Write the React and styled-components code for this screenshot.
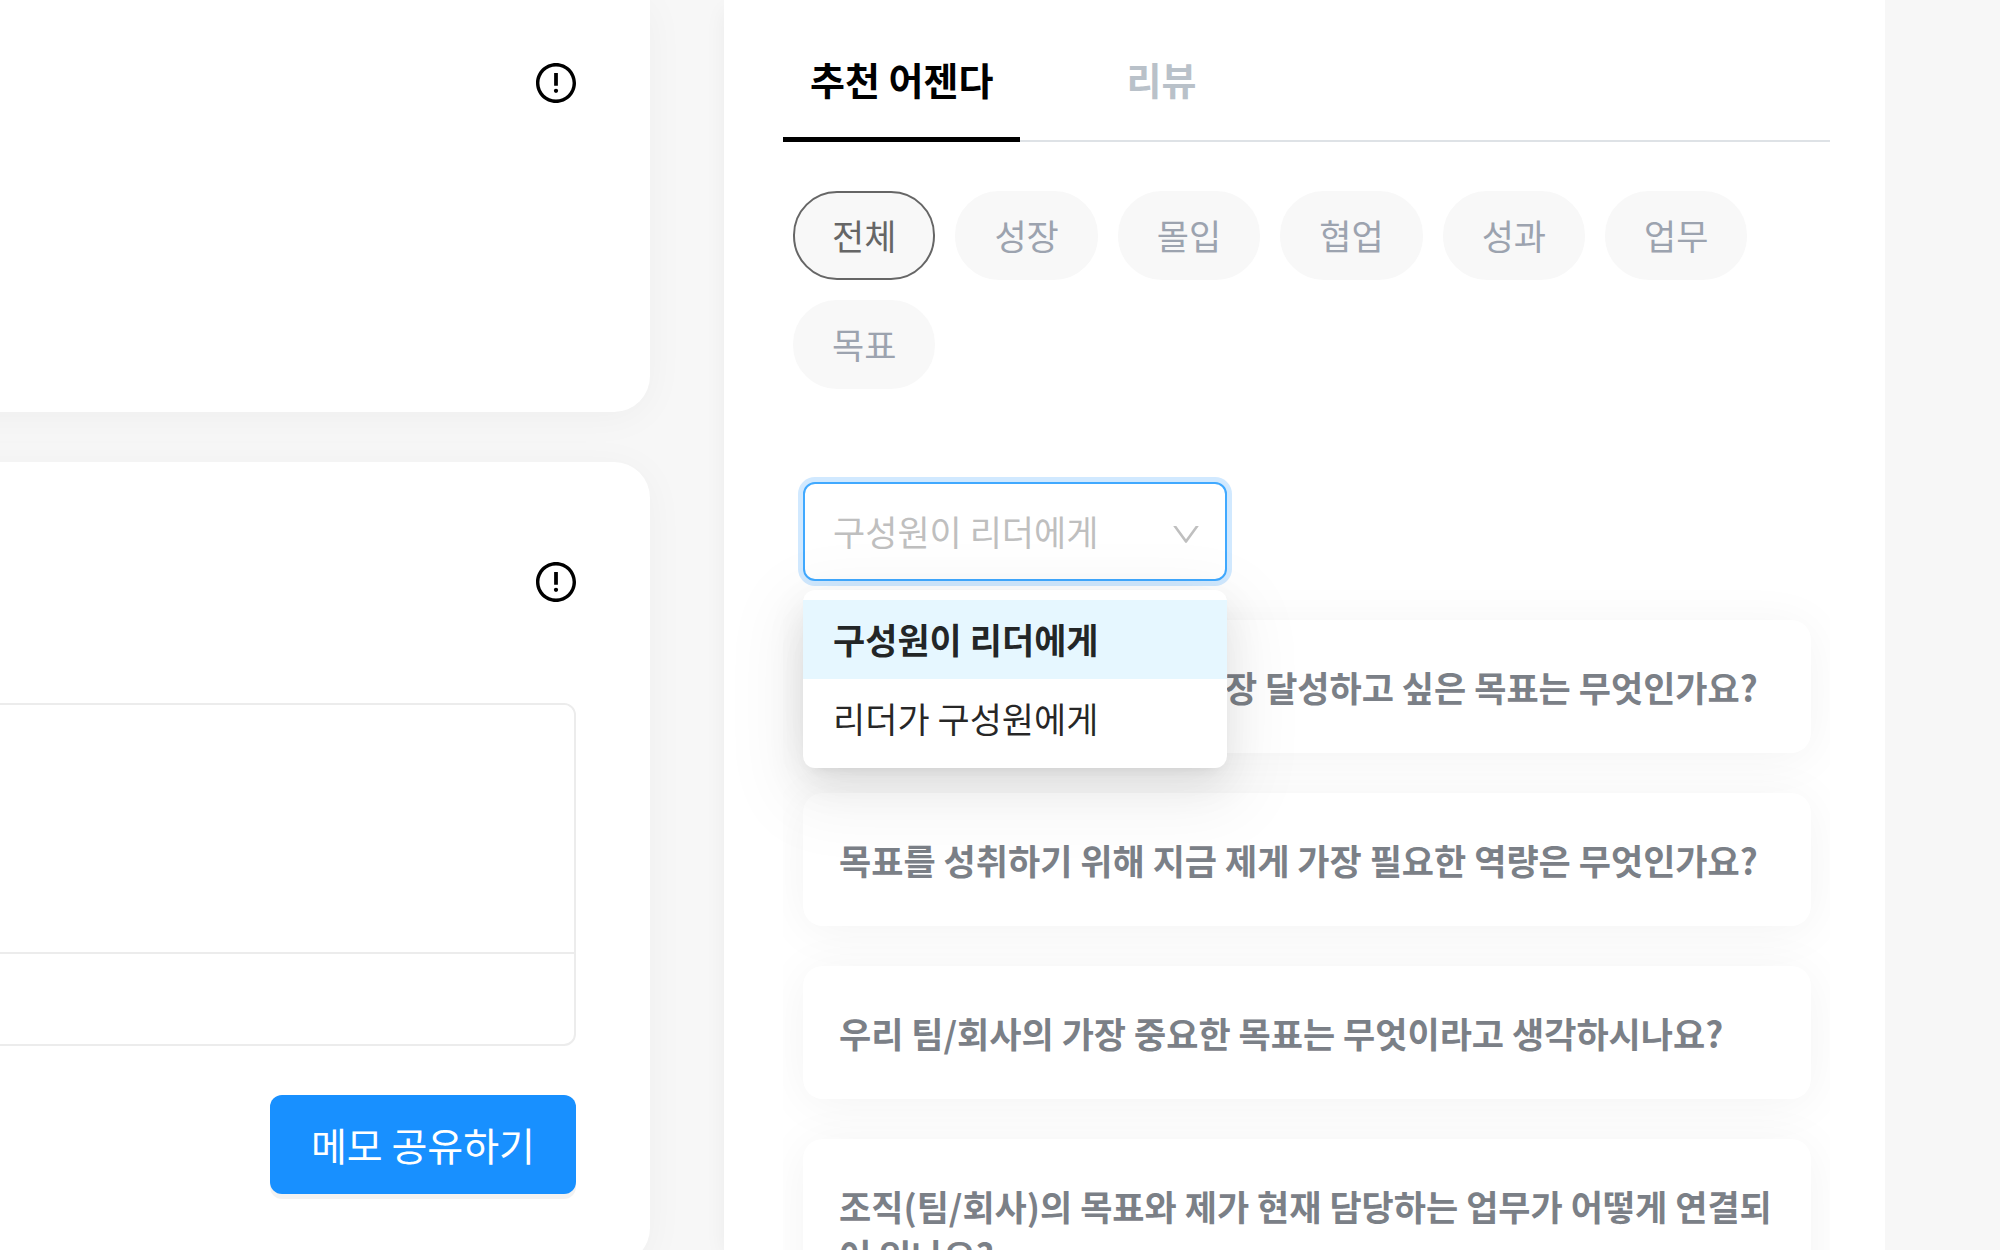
import React, {useState} from 'react'
import styled, {createGlobalStyle} from 'styled-components'

const GlobalStyle = createGlobalStyle`
  * {
    box-sizing: border-box;
  }
  body {
    margin: 0;
    background-color: #f7f7f7;
    overflow: hidden;
  }
  body, button, textarea {
    font-family: 'Noto Sans CJK KR', 'Noto Sans', sans-serif;
  }
`

const Page = styled.div`
  display: grid;
  grid-template-columns: minmax(0, 650fr) minmax(0, 1161fr);
  gap: 74px;
  height: 100vh;
  padding-right: 115px;
`
const Notes = styled.section`
  display: flex;
  flex-direction: column;
  gap: 50px;
  margin-left: -120px;
`
const NoteCard = styled.article`
  flex: none;
  display: flex;
  flex-direction: column;
  align-items: flex-end;
  padding: ${props => props.$first ? '63px' : '100px'} 74px 70px;
  min-height: ${props => props.$first ? '412px' : '0'};
  border-radius: ${props => props.$first ? '0 0 36px 36px' : '36px'};
  background-color: #fff;
  box-shadow: 0 5px 40px rgba(0, 0, 0, 0.04);
`
const InfoButton = styled.button`
  display: flex;
  padding: 0;
  border: none;
  background: none;
  color: #000;
  cursor: pointer;
`
const Editor = styled.div`
  width: 100%;
  margin: 101px 0 49px;
  border: 2px solid #ececec;
  border-radius: 12px;
  overflow: hidden;
`
const Memo = styled.textarea`
  display: block;
  width: 100%;
  height: 247px;
  padding: 24px;
  border: none;
  outline: none;
  resize: none;
  font-size: 35px;
`
const EditorFooter = styled.div`
  height: 92px;
  border-top: 2px solid #ececec;
`
const ShareButton = styled.button`
  height: 99px;
  padding: 0 41px 2px;
  border: none;
  border-radius: 12px;
  background-color: #1890ff;
  box-shadow: 0 5px 0 rgba(0, 0, 0, 0.05);
  color: #fff;
  font-size: 39px;
  cursor: pointer;
`
const Panel = styled.aside`
  padding: 22px 55px 0 59px;
  background-color: #fff;
  box-shadow: -10px 0 20px -10px rgba(0, 0, 0, 0.05);
  overflow: hidden;
`
const Tabs = styled.div`
  display: flex;
  gap: 79px;
  height: 120px;
  box-shadow: inset 0 -2px 0 #dee2e6;
`
const Tab = styled.button`
  padding: 0 27px 2px;
  border: none;
  border-bottom: 5px solid ${props => props.$active ? '#000' : 'transparent'};
  background: none;
  color: ${props => props.$active ? '#000' : '#b9c1c9'};
  font-size: 38px;
  font-weight: 700;
  line-height: 58px;
  cursor: pointer;
`
const Filters = styled.div`
  display: flex;
  flex-wrap: wrap;
  gap: 20px;
  padding: 49px 10px 0;
`
const Filter = styled.button`
  height: 89px;
  padding: 0 37px 2px;
  border: 2px solid ${props => props.$active ? '#666' : '#f8f8f8'};
  border-radius: 44px;
  background-color: #f8f8f8;
  color: ${props => props.$active ? '#666' : '#9ca3af'};
  font-size: 35px;
  cursor: pointer;
`
const Direction = styled.div`
  position: relative;
  z-index: 1;
  width: 424px;
  margin: 93px 0 0 20px;
`
const DirectionButton = styled.button`
  display: flex;
  align-items: center;
  justify-content: space-between;
  width: 100%;
  height: 99px;
  padding: 0 24px 2px 28px;
  border: 2px solid #40a9ff;
  border-radius: 12px;
  background-color: #fff;
  box-shadow: 0 0 0 5px rgba(24, 144, 255, 0.2);
  color: #bfbfbf;
  font-size: 35px;
  cursor: pointer;
`
const Menu = styled.ul`
  position: absolute;
  top: 108px;
  left: 0;
  right: 0;
  margin: 0;
  padding: 10px 0;
  list-style: none;
  border-radius: 12px;
  background-color: #fff;
  box-shadow:
    0 7px 15px -10px rgba(0, 0, 0, 0.12),
    0 15px 39px rgba(0, 0, 0, 0.08),
    0 22px 69px 20px rgba(0, 0, 0, 0.05);
`
const MenuItem = styled.li`
  padding: 12px 30px 13px;
  background-color: ${props => props.$active ? '#e6f7ff' : 'transparent'};
  color: rgba(0, 0, 0, 0.85);
  font-size: 35px;
  font-weight: ${props => props.$active ? 700 : 400};
  line-height: 54px;
  cursor: pointer;
`
const Agendas = styled.ul`
  display: flex;
  flex-direction: column;
  gap: 40px;
  margin: 0;
  padding: 39px 19px 40px 20px;
  list-style: none;
  overflow: hidden;
`
const Agenda = styled.li`
  padding: 42px 36px;
  border-radius: 20px;
  background-color: #fff;
  box-shadow: 0 5px 50px rgba(0, 0, 0, 0.05);
  color: #7b8087;
  font-size: 35px;
  font-weight: 700;
  line-height: 49px;
`

const tabs = ['추천 어젠다', '리뷰']
const filters = ['전체', '성장', '몰입', '협업', '성과', '업무', '목표']
const directions = ['구성원이 리더에게', '리더가 구성원에게']
const agendas = [
  '제가 이번 분기 업무에서 가장 달성하고 싶은 목표는 무엇인가요?',
  '목표를 성취하기 위해 지금 제게 가장 필요한 역량은 무엇인가요?',
  '우리 팀/회사의 가장 중요한 목표는 무엇이라고 생각하시나요?',
  '조직(팀/회사)의 목표와 제가 현재 담당하는 업무가 어떻게 연결되어 있나요?',
]

function InfoIcon() {
  return (
    <svg width="40" height="40" viewBox="64 64 896 896" fill="currentColor" aria-hidden="true">
      <path d="M512 64C264.6 64 64 264.6 64 512s200.6 448 448 448 448-200.6 448-448S759.4 64 512 64zm0 820c-205.4 0-372-166.6-372-372s166.6-372 372-372 372 166.6 372 372-166.6 372-372 372z" />
      <path d="M464 688a48 48 0 1 0 96 0 48 48 0 1 0-96 0zm14-112h68c4.4 0 8-3.6 8-8V296c0-4.4-3.6-8-8-8h-68c-4.4 0-8 3.6-8 8v272c0 4.4 3.6 8 8 8z" />
    </svg>
  )
}

function DownIcon() {
  return (
    <svg width="30" height="30" viewBox="64 -40 896 896" fill="currentColor" aria-hidden="true">
      <path d="M884 256h-75c-5.1 0-9.9 2.5-12.9 6.6L512 654.2 227.9 262.6c-3-4.1-7.8-6.6-12.9-6.6h-75c-6.5 0-10.3 7.4-6.5 12.7l352.6 486.1c12.8 17.6 39 17.6 51.7 0l352.6-486.1c3.9-5.3.1-12.7-6.4-12.7z" />
    </svg>
  )
}

export default function App() {
  const [tab, setTab] = useState(tabs[0])
  const [filter, setFilter] = useState(filters[0])
  const [direction, setDirection] = useState(directions[0])
  const [open, setOpen] = useState(true)

  const pick = item => {
    setDirection(item)
    setOpen(false)
  }

  return (
    <>
      <GlobalStyle />
      <Page>
        <Notes>
          <NoteCard $first>
            <InfoButton aria-label="안내"><InfoIcon /></InfoButton>
          </NoteCard>
          <NoteCard>
            <InfoButton aria-label="메모 안내"><InfoIcon /></InfoButton>
            <Editor>
              <Memo aria-label="메모" />
              <EditorFooter />
            </Editor>
            <ShareButton>메모 공유하기</ShareButton>
          </NoteCard>
        </Notes>

        <Panel>
          <Tabs role="tablist">
            {tabs.map(name => (
              <Tab key={name} role="tab" aria-selected={tab === name} $active={tab === name} onClick={() => setTab(name)}>
                {name}
              </Tab>
            ))}
          </Tabs>
          <Filters>
            {filters.map(name => (
              <Filter key={name} $active={filter === name} onClick={() => setFilter(name)}>{name}</Filter>
            ))}
          </Filters>
          <Direction>
            <DirectionButton aria-haspopup="listbox" aria-expanded={open} onClick={() => setOpen(!open)}>
              {direction}
              <DownIcon />
            </DirectionButton>
            {open && (
              <Menu role="listbox">
                {directions.map(item => (
                  <MenuItem key={item} role="option" aria-selected={direction === item} $active={direction === item} onClick={() => pick(item)}>
                    {item}
                  </MenuItem>
                ))}
              </Menu>
            )}
          </Direction>
          <Agendas>
            {agendas.map(text => <Agenda key={text}>{text}</Agenda>)}
          </Agendas>
        </Panel>
      </Page>
    </>
  )
}
